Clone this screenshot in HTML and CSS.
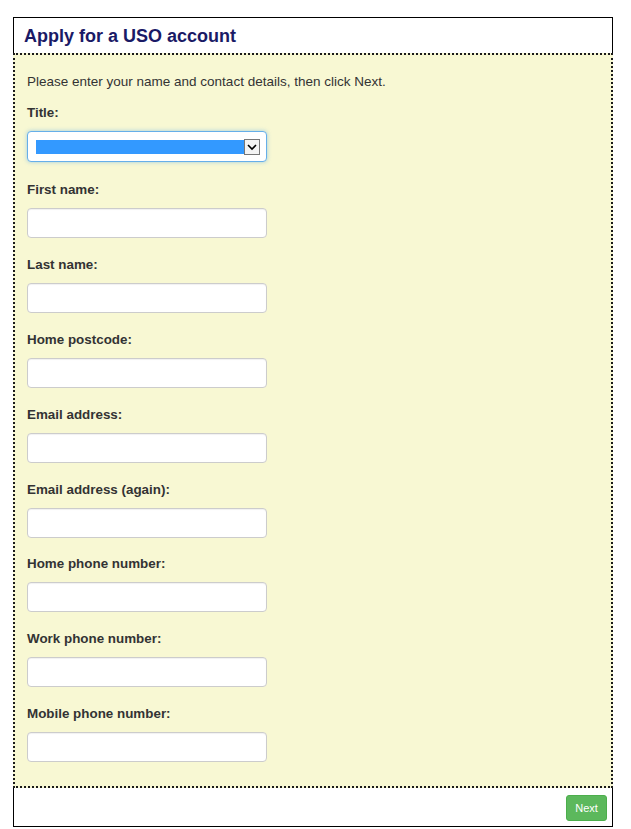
FILE: index.html
```html
<!DOCTYPE html>
<html lang="en">
<head>
<meta charset="utf-8">
<title>Apply for a USO account</title>
<link rel="stylesheet" href="styles.css">
</head>
<body>
<div class="panel">
  <div class="panel-head">
    <h1 class="panel-title">Apply for a USO account</h1>
  </div>
  <div class="panel-body">
    <p class="intro">Please enter your name and contact details, then click Next.</p>
    <div class="field field-select">
      <label class="field-label">Title:</label>
      <div class="fake-select">
        <span class="fake-select-value"></span>
        <span class="fake-select-arrow">
          <svg width="12" height="8" viewBox="0 0 12 8"><path d="M2 2 L6 6 L10 2" fill="none" stroke="#000" stroke-width="1.6"/></svg>
        </span>
      </div>
    </div>
    <div class="field">
      <label class="field-label">First name:</label>
      <input class="text-input" type="text">
    </div>
    <div class="field">
      <label class="field-label">Last name:</label>
      <input class="text-input" type="text">
    </div>
    <div class="field">
      <label class="field-label">Home postcode:</label>
      <input class="text-input" type="text">
    </div>
    <div class="field">
      <label class="field-label">Email address:</label>
      <input class="text-input" type="text">
    </div>
    <div class="field">
      <label class="field-label">Email address (again):</label>
      <input class="text-input" type="text">
    </div>
    <div class="field">
      <label class="field-label">Home phone number:</label>
      <input class="text-input" type="text">
    </div>
    <div class="field">
      <label class="field-label">Work phone number:</label>
      <input class="text-input" type="text">
    </div>
    <div class="field field-last">
      <label class="field-label">Mobile phone number:</label>
      <input class="text-input" type="text">
    </div>
  </div>
  <div class="panel-foot">
    <button class="btn-next" type="button">Next</button>
  </div>
</div>
</body>
</html>
```
FILE: styles.css
```css
* { box-sizing: border-box; }
body {
  margin: 0;
  background: #fff;
  font-family: "Liberation Sans", Arial, sans-serif;
  color: #333;
}
.panel {
  width: 600px;
  margin: 17px 0 0 13px;
}
.panel-head {
  border: 1px solid #000;
  border-bottom: none;
  height: 36px;
  padding: 7px 0 0 10px;
}
.panel-title {
  margin: 0;
  font-size: 18px;
  line-height: 22px;
  font-weight: bold;
  color: #1a1a66;
}
.panel-body {
  background: #f8f8d3;
  border: 2px dotted #1a1a1a;
  padding: 18px 12px 24px 12px;
}
.intro {
  margin: 0 0 13px 0;
  font-size: 13.5px;
  line-height: 18px;
}
.field {
  display: flex;
  flex-direction: column;
  align-items: flex-start;
  margin-bottom: 17.9px;
}
.field-select { margin-bottom: 19px; }
.field-last { margin-bottom: 0; }
.field-label {
  font-size: 13.4px;
  line-height: 18px;
  font-weight: bold;
  margin-bottom: 9px;
}
.text-input {
  width: 240px;
  height: 30px;
  border: 1px solid #ccc;
  border-radius: 4px;
  background: #fff;
  margin: 0;
  padding: 0 8px;
  box-shadow: inset 0 1px 1px rgba(0,0,0,0.06);
}
.fake-select {
  width: 240px;
  height: 31px;
  border: 1px solid #66afe9;
  border-radius: 4px;
  background: #fff;
  box-shadow: 0 0 4px rgba(102,175,233,0.6);
  display: flex;
  align-items: center;
  padding: 0 6px 0 8px;
}
.fake-select-value {
  flex: 1;
  height: 14px;
  background: #3399ff;
}
.fake-select-arrow {
  width: 16px;
  height: 16px;
  border: 1px solid #777;
  background: #f4f4f4;
  display: flex;
  align-items: center;
  justify-content: center;
}
.fake-select-arrow svg { display: block; }
.panel-foot {
  border: 1px solid #000;
  border-top: none;
  height: 39px;
  display: flex;
  justify-content: flex-end;
  align-items: flex-start;
  padding: 7px 5px 0 0;
}
.btn-next {
  width: 41px;
  height: 26px;
  background: #5cb85c;
  border: 1px solid #4cae4c;
  border-radius: 3px;
  color: #fff;
  font-family: "Liberation Sans", Arial, sans-serif;
  font-size: 11px;
  padding: 0;
}
```
